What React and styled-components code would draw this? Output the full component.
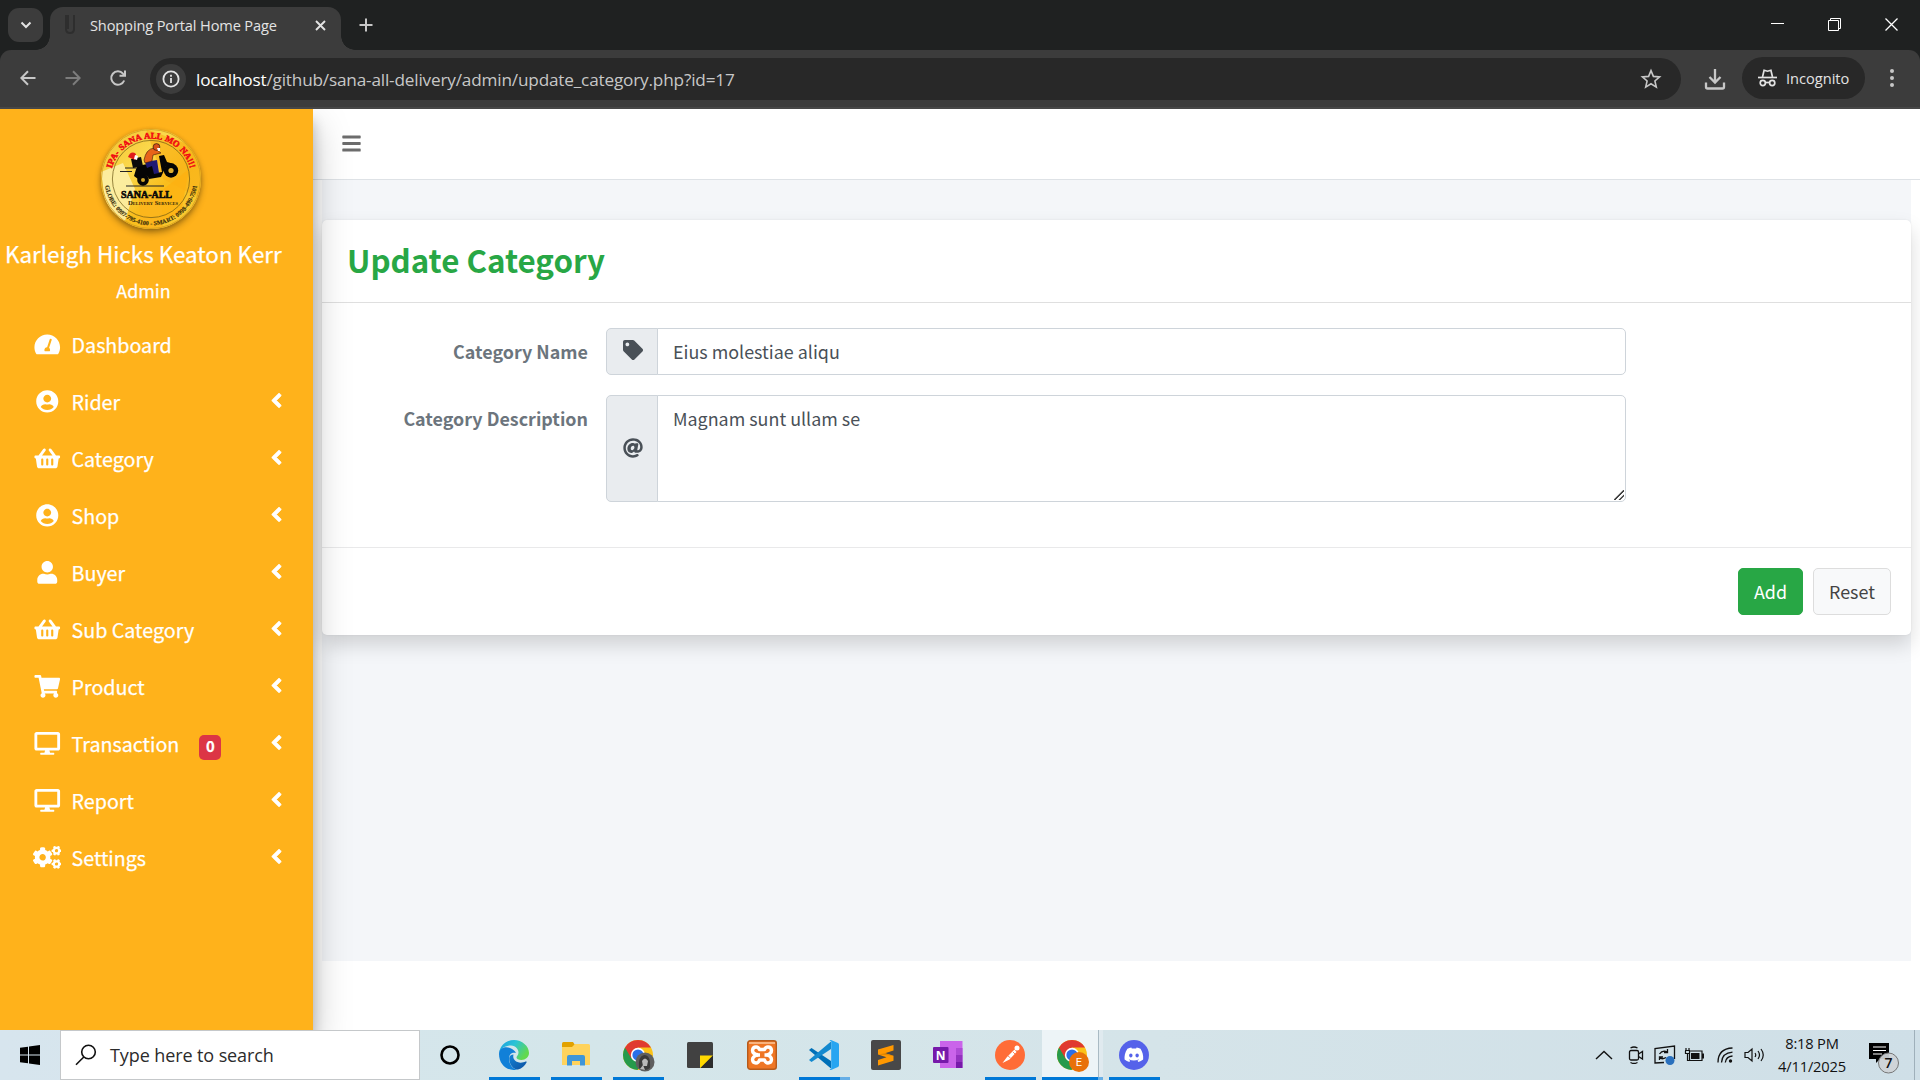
import React from "react";
import styled, { createGlobalStyle, css } from "styled-components";
import {
  FaUserCircle,
  FaShoppingBasket,
  FaUser,
  FaShoppingCart,
  FaDesktop,
  FaCogs,
  FaAngleLeft,
  FaTag,
  FaAt,
  FaBars,
} from "react-icons/fa";

const pageFont = `"Noto Sans CJK JP", "Noto Sans", sans-serif`;
const systemFont = `"Open Sans", "Noto Sans", sans-serif`;

const GlobalStyle = createGlobalStyle`
  *, *::before, *::after { box-sizing: border-box; }
  body { margin: 0; background: #fff; overflow: hidden; font-family: ${pageFont}; }
  svg { display: block; flex: none; }
`;

const Screen = styled.div`
  width: 1920px;
  height: 1080px;
  display: flex;
  flex-direction: column;
  overflow: hidden;
`;

/* ---------- browser window ---------- */

const TabStrip = styled.div`
  height: 50px;
  flex: none;
  display: flex;
  align-items: flex-end;
  background: #1f2121;
  padding-left: 8px;
  font-family: ${systemFont};
`;

const TabSearch = styled.div`
  width: 35px;
  height: 34px;
  margin-bottom: 8px;
  border-radius: 11px;
  background: #3c3c3c;
  display: grid;
  place-items: center;
`;

const Tab = styled.div`
  position: relative;
  width: 291px;
  height: 43px;
  margin-left: 7px;
  padding: 0 14px 7px 14px;
  border-radius: 13px 13px 0 0;
  background: #3c3c3c;
  display: flex;
  align-items: center;
  color: #e3e3e3;
  &::before,
  &::after {
    content: "";
    position: absolute;
    bottom: 0;
    width: 14px;
    height: 14px;
  }
  &::before {
    left: -14px;
    background: radial-gradient(circle at 0 0, transparent 13.5px, #3c3c3c 14px);
  }
  &::after {
    right: -14px;
    background: radial-gradient(circle at 100% 0, transparent 13.5px, #3c3c3c 14px);
  }
`;

const TabTitle = styled.span`
  margin-left: 14px;
  flex: 1;
  font-size: 14.6px;
  letter-spacing: -0.14px;
  line-height: 20px;
  white-space: nowrap;
`;

const NewTab = styled.div`
  width: 50px;
  height: 50px;
  padding-right: 1px;
  display: grid;
  place-items: center;
`;

const WindowButtons = styled.div`
  margin-left: auto;
  height: 50px;
  display: flex;
`;

const WindowButton = styled.div`
  width: 57px;
  height: 49px;
  display: grid;
  place-items: center;
`;

const ToolbarBack = styled.div`
  flex: none;
  height: 59px;
  background: #1f2121;
`;

const Toolbar = styled.div`
  height: 59px;
  border-radius: 11px 11px 0 0;
  background: #3c3c3c;
  border-bottom: 2px solid #474747;
  display: flex;
  align-items: center;
  padding: 0 14px 1px 5px;
  font-family: ${systemFont};
`;

const ToolButton = styled.div`
  width: 45px;
  height: 44px;
  padding-top: ${(p) => (p.$drop ? 2 : 0)}px;
  display: grid;
  place-items: center;
`;

const AddressBar = styled.div`
  flex: 1;
  height: 42px;
  margin: 2px 11px 0 10px;
  border-radius: 21px;
  background: #282828;
  display: flex;
  align-items: center;
  padding: 0 18px 0 6px;
`;

const SiteInfo = styled.div`
  width: 30px;
  height: 30px;
  border-radius: 50%;
  background: #3c3c3c;
  display: grid;
  place-items: center;
`;

const Url = styled.span`
  flex: 1;
  margin-left: 10px;
  padding-top: 1px;
  font-size: 17.2px;
  letter-spacing: -0.18px;
  line-height: 24px;
  color: #c7c7c7;
  b {
    font-weight: 400;
    color: #fff;
  }
`;

const IncognitoPill = styled.div`
  width: 123px;
  height: 42px;
  margin: 0 13px 0 5px;
  border-radius: 21px;
  background: #282828;
  color: #e3e3e3;
  display: flex;
  align-items: center;
  padding-left: 16px;
  gap: 9px;
  font-size: 14.6px;
`;

/* ---------- admin page ---------- */

const Page = styled.div`
  height: 921px;
  flex: none;
  display: flex;
  overflow: hidden;
`;

const Sidebar = styled.aside`
  position: relative;
  z-index: 2;
  width: 313px;
  flex: none;
  background: #ffb21b;
  color: #fff;
  -webkit-text-stroke: 0.25px #fff;
  padding-top: 20px;
  box-shadow: 0 17px 35px rgba(0, 0, 0, 0.25), 0 12px 12px rgba(0, 0, 0, 0.22);
`;

const LogoWrap = styled.div`
  width: 100px;
  height: 100px;
  margin-left: 101px;
  border-radius: 50%;
  box-shadow: 0 4px 7px rgba(0, 0, 0, 0.32), 0 1px 4px rgba(0, 0, 0, 0.2);
  -webkit-text-stroke: 0;
`;

const UserName = styled.div`
  margin: 8px 0 0 5px;
  font-size: 22.4px;
  line-height: 32px;
  white-space: nowrap;
`;

const UserRole = styled.div`
  width: 287px;
  margin-top: 7px;
  text-align: center;
  font-size: 17.9px;
  line-height: 28px;
`;

const Menu = styled.nav`
  margin-top: 12px;
  display: flex;
  flex-direction: column;
`;

const MenuItem = styled.div`
  height: 57px;
  display: flex;
  align-items: center;
  padding: 0 31px 0 31px;
  font-size: 19.7px;
  line-height: 30px;
`;

const MenuIcon = styled.span`
  width: 32px;
  display: flex;
  justify-content: center;
  font-size: 22.8px;
  svg {
    width: 1.25em;
    height: 1em;
  }
`;

const MenuText = styled.span`
  margin-left: 8.5px;
`;

const Badge = styled.span`
  width: 22px;
  height: 25px;
  margin: 7px 0 0 20px;
  border-radius: 5px;
  background: #dc3545;
  font-size: 14.8px;
  line-height: 22px;
  font-weight: 700;
  text-align: center;
`;

const Caret = styled.span`
  margin: -3px -6.5px 0 auto;
  font-size: 23px;
  width: 24px;
  display: flex;
  justify-content: center;
  svg {
    stroke: #fff;
    stroke-width: 14px;
  }
`;

const Main = styled.main`
  flex: 1;
  display: flex;
  flex-direction: column;
`;

const Navbar = styled.header`
  height: 71px;
  flex: none;
  background: #fff;
  border-bottom: 1px solid #dee2e6;
  display: flex;
  align-items: center;
  padding: 0 0 1px 28px;
  color: #6c6c6c;
  font-size: 21px;
`;

const Content = styled.section`
  height: 781px;
  margin: 0 9px;
  padding-top: 40px;
  background: #f4f6f9;
`;

const Card = styled.div`
  height: 415px;
  border-radius: 5px;
  background: #fff;
  box-shadow: 0 10px 20px rgba(0, 0, 0, 0.15), 0 0 2px rgba(0, 0, 0, 0.08);
  display: flex;
  flex-direction: column;
`;

const CardHeader = styled.div`
  height: 83px;
  border-bottom: 1px solid #dfdfdf;
  padding: 17px 0 0 25px;
`;

const CardTitle = styled.h1`
  margin: 0;
  color: #28a745;
  font-size: 31.3px;
  line-height: 46px;
  font-weight: 700;
`;

const CardBody = styled.div`
  flex: 1;
  padding-top: 25px;
  display: flex;
  flex-direction: column;
  gap: 20px;
`;

const FormRow = styled.div`
  display: flex;
`;

const Label = styled.label`
  width: 266px;
  margin-right: 18px;
  text-align: right;
  color: #6c757d;
  font-size: 17.9px;
  line-height: 30px;
  padding-top: 8px;
  font-weight: 700;
`;

const InputGroup = styled.div`
  width: 1020px;
  height: ${(p) => (p.$tall ? 107 : 47)}px;
  display: flex;
`;

const Addon = styled.span`
  width: 52px;
  border: 1px solid #ced4da;
  border-radius: 5px 0 0 5px;
  background: #e9ecef;
  color: #495057;
  font-size: 20px;
  display: flex;
  align-items: center;
  justify-content: center;
  padding: 0 0 ${(p) => (p.$lift ? 3 : 1)}px 1px;
`;

const field = css`
  flex: 1;
  margin: 0 0 0 -1px;
  border: 1px solid #ced4da;
  border-radius: 0 5px 5px 0;
  background: #fff;
  color: #495057;
  font: 400 17.9px/30px ${pageFont};
  outline: none;
`;

const TextInput = styled.input`
  ${field}
  padding: 6px 15px 8px 15px;
`;

const TextArea = styled.textarea`
  ${field}
  padding: 7px 15px 7px 15px;
  resize: vertical;
  &::-webkit-resizer {
    background: linear-gradient(
        135deg,
        transparent 6.2px,
        #444 6.8px,
        #444 7.8px,
        transparent 8.4px,
        transparent 9.8px,
        #444 10.4px,
        #444 11.2px,
        transparent 11.8px
      )
      4px 4px / 10px 10px no-repeat;
  }
`;

const CardFooter = styled.div`
  height: 88px;
  border-top: 1px solid #e9e9ea;
  padding: 20px 20px 0 0;
  display: flex;
  justify-content: flex-end;
  gap: 10px;
`;

const Button = styled.button`
  width: ${(p) => p.$width}px;
  height: 47px;
  padding: 0 0 1px;
  border-radius: 5px;
  border: 1px solid ${(p) => (p.$primary ? "#28a745" : "#ddd")};
  background: ${(p) => (p.$primary ? "#28a745" : "#f8f9fa")};
  color: ${(p) => (p.$primary ? "#fff" : "#444")};
  font: 400 17.9px/30px ${pageFont};
`;

/* ---------- taskbar ---------- */

const Taskbar = styled.footer`
  height: 50px;
  flex: none;
  display: flex;
  background: linear-gradient(90deg, #d7e5ee 0, #d4e6ea 30%, #d5e4e9 60%, #cfdfe7 100%);
  color: #111;
  font-family: ${systemFont};
`;

const StartButton = styled.div`
  width: 60px;
  display: grid;
  place-items: center;
`;

const SearchBox = styled.div`
  width: 360px;
  height: 50px;
  border: 1px solid #c5c8ca;
  background: #fff;
  display: flex;
  align-items: center;
  padding-left: 14px;
  gap: 13px;
  color: #2b2b2b;
  font-size: 18px;
  letter-spacing: -0.1px;
`;

const Cortana = styled.div`
  width: 63px;
  padding-right: 3px;
  display: grid;
  place-items: center;
`;

const TaskApp = styled.div`
  position: relative;
  width: 62px;
  height: 50px;
  display: grid;
  place-items: center;
  &::before {
    content: "";
    display: ${(p) => (p.$active ? "block" : "none")};
    position: absolute;
    inset: 0 0 0 1px;
    background: linear-gradient(90deg, #edf4f7 56px, #a9bac4 56px, #a9bac4 57px, #e0eaef 57px);
  }
  &::after {
    content: "";
    display: ${(p) => (p.$running ? "block" : "none")};
    position: absolute;
    bottom: 0;
    height: 3px;
    left: ${(p) => (p.$active ? 1 : 6)}px;
    width: ${(p) => (p.$active ? 61 : 51)}px;
    background: ${(p) =>
      p.$grouped
        ? "linear-gradient(90deg, #0078d7 41px, #66aee6 41px)"
        : p.$active
        ? "linear-gradient(90deg, #0078d7 56px, #66aee6 56px)"
        : "#0078d7"};
  }
  svg {
    position: relative;
  }
`;

const Tray = styled.div`
  margin-left: auto;
  display: flex;
  align-items: center;
`;

const TrayIcon = styled.div`
  width: ${(p) => p.$width || 30}px;
  display: grid;
  place-items: center;
`;

const Notifications = styled.div`
  width: 60px;
  padding: 6px 0 0 15px;
`;

const Clock = styled.div`
  width: 84px;
  font-size: 14.7px;
  letter-spacing: -0.2px;
  line-height: 23px;
  text-align: center;
  white-space: nowrap;
`;

const ShowDesktop = styled.div`
  width: 6px;
  height: 50px;
  border-left: 1px solid #9fb0ba;
`;

const Glyph = ({ w, h = w, box, color = "#c7c7c7", stroke = 2, children }) => (
  <svg width={w} height={h} viewBox={box || `0 0 ${w} ${h}`} fill="none" stroke={color} strokeWidth={stroke}>
    {children}
  </svg>
);

const GaugeIcon = () => (
  <svg viewBox="0 0 576 512" fill="currentColor">
    <path
      fillRule="evenodd"
      d="M288 32C129 32 0 161 0 320c0 53 14 102 39 145 6 9 16 15 27 15h444c11 0 21-6 27-15 25-43 39-92 39-145C576 161 447 32 288 32zM371 129c13 4 20 18 16 31l-57 172c13 11 22 28 22 48 0 12-3 23-9 32H233c-6-9-9-20-9-32 0-35 29-64 61-62l57-173c4-13 17-20 29-16z"
    />
  </svg>
);

const BrandLogo = () => (
  <svg width="100" height="100" viewBox="0 0 100 100">
    <defs>
      <linearGradient id="disc" x1="0" y1="0" x2="1" y2="1">
        <stop offset="0" stopColor="#f4bf2c" />
        <stop offset=".35" stopColor="#fbd94c" />
        <stop offset=".6" stopColor="#f9bd1c" />
        <stop offset="1" stopColor="#fbd03c" />
      </linearGradient>
      <clipPath id="round"><circle cx="50" cy="50" r="50" /></clipPath>
      <path id="arcTop" d="M9.500 50 A40.500 40.500 0 0 1 90.500 50" />
      <path id="arcBottom" d="M3.600 50 A46.400 46.400 0 0 0 96.400 50" />
    </defs>
    <g clipPath="url(#round)">
      <rect width="100" height="100" fill="url(#disc)" />
      <path d="M0 43 L22 34 L34 60 L24 92 L6 84 Z" fill="#fdf2b4" opacity=".8" />
      <path d="M45 0 L100 20 V70 L62 50 Z" fill="#f9b41a" opacity=".7" />
      <path d="M60 62 L88 40 L80 84 L58 92 Z" fill="#fdb010" opacity=".75" />
      <path d="M38 70 L60 62 L62 100 H40 Z" fill="#fcb51c" opacity=".9" />
    </g>
    <circle cx="50" cy="50" r="49.500" fill="none" stroke="#cf9d20" strokeWidth=".8" />
    <circle cx="50" cy="50" r="38.600" fill="none" stroke="#6b5714" strokeWidth=".7" />
    <text fontFamily="Liberation Serif, serif" fontWeight="700" fontSize="8.700" wordSpacing=".8" fill="#f00a12" stroke="#f00a12" strokeWidth=".5">
      <textPath href="#arcTop" startOffset="50%" textAnchor="middle">IPA- SANA ALL MO NA!!!</textPath>
    </text>
    <text fontFamily="Liberation Serif, serif" fontWeight="700" fontSize="6.200" fill="#3a300c" stroke="#3a300c" strokeWidth=".15">
      <textPath href="#arcBottom" startOffset="50%" textAnchor="middle" textLength="132" lengthAdjust="spacingAndGlyphs">GLOBE: 0997-795-4100 - SMART: 0998-499-7501</textPath>
    </text>
    <g stroke="#222" strokeWidth="1">
      <path d="M24 39h11M19 42.500h12M25 57h38" />
    </g>
    <circle cx="42" cy="51" r="5.800" fill="#050505" />
    <circle cx="42" cy="51" r="2" fill="#cfa52a" />
    <circle cx="70" cy="41.500" r="7.200" fill="#050505" />
    <circle cx="70" cy="41.500" r="2.600" fill="#e0b030" />
    <path d="M33 47 L36 37 L52 34 L55 44 L61 43 L58 27 L63 26 L66 33 L73 35 L65 37 L60 48 L48 50 Q45 43 37 50 Z" fill="#050505" />
    <path d="M30 30 L40 28 L42 37 L32 39 Z" fill="#0b0b0b" />
    <path d="M27 28 Q30 21 35 25 L34 31 Z" fill="#e01b1b" />
    <path d="M34 26l3 1-1 4-3-1z" fill="#fff" />
    <path d="M44 33 L56 31 L58 44 L53 45 L51 37 L46 39 Z" fill="#201a74" />
    <path d="M43 31 Q45 20 53 19 L60 24 L52 26 L51 32 L44 34 Z" fill="#e8641a" stroke="#3a1a08" strokeWidth=".6" />
    <circle cx="55.500" cy="18" r="3.400" fill="#d9501a" stroke="#111" strokeWidth=".6" />
    <path d="M56 19h3v3h-2z" fill="#fff" />
    <text x="20" y="68.700" textLength="51" lengthAdjust="spacingAndGlyphs" fontFamily="Liberation Serif, serif" fontWeight="700" fontSize="9.800" fill="#0a0a0a" stroke="#0a0a0a" strokeWidth=".6">SANA-ALL</text>
    <text x="27" y="75.800" textLength="50" lengthAdjust="spacingAndGlyphs" fontFamily="Liberation Serif, serif" fontVariant="small-caps" fontWeight="700" fontSize="6" fill="#2c240a">Delivery Services</text>
  </svg>
);

const EdgeIcon = () => (
  <svg width="30" height="30" viewBox="0 0 30 30">
    <defs>
      <linearGradient id="edgeTop" x1="0" y1="0" x2="1" y2=".5">
        <stop offset="0" stopColor="#1b9de2" /><stop offset=".5" stopColor="#2cc3d5" /><stop offset="1" stopColor="#62d94e" />
      </linearGradient>
      <linearGradient id="edgeLow" x1="0" y1="0" x2="1" y2="1">
        <stop offset="0" stopColor="#1384d8" /><stop offset="1" stopColor="#0c4f9f" />
      </linearGradient>
    </defs>
    <path d="M15 0C7 0 1 5.500 0 13c2-5 7-7.500 12-7.500 5 0 7.500 4 7.500 7 0 2.500-2 3.500-2 5 0 1.600 2 2.500 5 2.500 4 0 7.500-3 7.500-7C30 6 23 0 15 0z" fill="url(#edgeTop)" />
    <path d="M0 14C0 8 6 6 11 8c3 1 5 3 6 5-5-1-7 2-7 6 0 6 5 11 9 10.500C9 32 0 25 0 14z" fill="#1180d8" />
    <path d="M10.200 18C10 25 15 29.800 19 29.500c4-1 7-4 8.500-7 .5-1-.2-1.400-1-.9-2.500 1.400-8 1.800-10.500-1-2-2-2-4-1.500-6-2.500 0-4 1.400-4.300 3.400z" fill="url(#edgeLow)" />
  </svg>
);

const ExplorerIcon = () => (
  <svg width="28" height="26" viewBox="0 0 28 26">
    <path d="M0 1.500Q0 0 1.500 0H11l2 3v6H0z" fill="#e2a100" />
    <path d="M0 5h10l3-3h13.500Q28 2 28 3.500V23H0z" fill="#ffd35c" />
    <path d="M5 23.500V15q0-2 2-2h14q2 0 2 2v8.500h-5V19h-8v4.500z" fill="#3f96d8" />
  </svg>
);

const ChromeIcon = ({ children }) => (
  <svg width="32" height="32" viewBox="1 -1 32 32" overflow="visible">
    <circle cx="17" cy="15" r="15" fill="#fbc218" />
    <path d="M17 15L4 7.500A15 15 0 0 0 16.500 30L23.500 18.500Z" fill="#269a4b" />
    <path d="M4 7.500A15 15 0 0 1 30 7.500H17L10.500 18.700Z" fill="#e03a2f" />
    <circle cx="17" cy="15" r="7.200" fill="#fff" />
    <circle cx="17" cy="15" r="5.600" fill="#2a6fe8" />
    {children}
  </svg>
);

const StickyIcon = () => (
  <svg width="26" height="26" viewBox="0 0 26 26">
    <rect width="26" height="26" rx="1.500" fill="#414141" />
    <path d="M13 13.500h13L13.500 26H13z" fill="#ffd900" />
    <path d="M26 13.500V26H13.500z" fill="#2c2c2c" />
  </svg>
);

const XamppIcon = () => (
  <svg width="30" height="30" viewBox="0 0 30 30">
    <rect x=".7" y=".7" width="28.600" height="28.600" rx="2.500" fill="#ef7624" stroke="#b65a1b" strokeWidth="1.400" />
    <path d="M2 2h26v2H2z" fill="#f9b37d" />
    <g fill="none" stroke="#fff" strokeWidth="3.400" strokeLinejoin="round">
      <path d="M11 14.800Q5.500 14 5.500 10.300 5.800 7 9 7q2.500 0 3.500 2.500h5Q18.500 7 21 7q3.200 0 3.500 3.300 0 3.700-4.500 4.500" />
      <path d="M11 14.800Q5.500 16 5.500 19.700 5.800 23 9 23q2.500 0 3.500-3h5q1 3 3.500 3 3.200 0 3.500-3.300 0-3.700-4.500-4.900" />
      <path d="M10 15h3M17.500 15h3" />
    </g>
  </svg>
);

const CodeIcon = () => (
  <svg width="30" height="30" viewBox="0 0 30 30">
    <path d="M2.500 8L0 10l22 18.500V21z" fill="#0070b8" />
    <path d="M2.500 22L0 20 22 1.500V9z" fill="#1389cf" />
    <path d="M22 0l7 3q1 .5 1 1.800v20.400q0 1.300-1 1.800l-7 3q-.8.200-1.500-.5l1.700-.8V1.300L20.500.5q.7-.7 1.500-.5z" fill="#27a5f1" />
  </svg>
);

const SublimeIcon = () => (
  <svg width="30" height="30" viewBox="0 0 30 30">
    <rect width="30" height="30" rx="2" fill="#484848" />
    <path d="M22.500 5v5.500L14 13.200l8.500 2.600v5L7 25.500V20l8.500-2.700L7 14.600V9.500z" fill="#ff9800" />
    <path d="M7 14.600l15.500 1.200-8.500-2.600z" fill="#e08600" />
  </svg>
);

const OneNoteIcon = () => (
  <svg width="30" height="30" viewBox="0 0 30 30">
    <path d="M7 1h22.500v27H7z" fill="#ca64ea" />
    <path d="M23 8h6.500v7H23z" fill="#ae4bd5" />
    <path d="M23 15h6.500v7H23z" fill="#9332bf" />
    <path d="M23 22h6.500v6H23z" fill="#7719aa" />
    <rect y="7" width="15.500" height="16" rx="1" fill="#7719aa" />
    <text x="7.700" y="19.500" textAnchor="middle" fontFamily="Open Sans, sans-serif" fontWeight="700" fontSize="12" fill="#fff">N</text>
  </svg>
);

const PostmanIcon = () => (
  <svg width="30" height="30" viewBox="0 0 30 30">
    <circle cx="15" cy="15" r="15" fill="#ff6c37" />
    <circle cx="22" cy="8" r="2.500" fill="#fff" />
    <path d="M19.500 9.500l2 2.500-7 7.500-7 3.500 4.500-6z" fill="#fff" />
    <path d="M12.500 15.500l3 2.500M18 12l2 2" stroke="#ff6c37" strokeWidth=".8" />
  </svg>
);

const DiscordIcon = () => (
  <svg width="30" height="30" viewBox="0 0 30 30">
    <circle cx="15" cy="15" r="15" fill="#5562ea" />
    <path transform="translate(5.500 5.300) scale(.79)" d="M20.317 4.370a19.791 19.791 0 0 0-4.885-1.515.074.074 0 0 0-.079.037c-.21.375-.444.864-.608 1.250a18.270 18.270 0 0 0-5.487 0 12.640 12.640 0 0 0-.617-1.250.077.077 0 0 0-.079-.037A19.736 19.736 0 0 0 3.677 4.370C.533 9.046-.320 13.580.099 18.058a20 20 0 0 0 5.993 3.030c.462-.630.874-1.295 1.226-1.994a13 13 0 0 1-1.872-.892l.372-.292c3.928 1.793 8.180 1.793 12.062 0l.373.292a12.300 12.300 0 0 1-1.873.892c.36.698.772 1.362 1.225 1.993a19.900 19.900 0 0 0 6.002-3.030c.5-5.177-.838-9.674-3.290-13.687zM8.020 15.331c-1.183 0-2.157-1.086-2.157-2.419s.956-2.419 2.157-2.419c1.210 0 2.176 1.096 2.157 2.419 0 1.333-.956 2.419-2.157 2.419zm7.975 0c-1.183 0-2.157-1.086-2.157-2.419s.955-2.419 2.157-2.419c1.210 0 2.176 1.096 2.157 2.419 0 1.333-.946 2.419-2.157 2.419z" fill="#fff" />
  </svg>
);

const menu = [
  ["Dashboard", GaugeIcon, false],
  ["Rider", FaUserCircle, true],
  ["Category", FaShoppingBasket, true],
  ["Shop", FaUserCircle, true],
  ["Buyer", FaUser, true],
  ["Sub Category", FaShoppingBasket, true],
  ["Product", FaShoppingCart, true],
  ["Transaction", FaDesktop, true, "0"],
  ["Report", FaDesktop, true],
  ["Settings", FaCogs, true],
];

const BrowserTabs = () => (
  <TabStrip>
    <TabSearch>
      <Glyph w={12} h={8} color="#e3e3e3"><path d="M1.500 1.500L6 6l4.500-4.500" /></Glyph>
    </TabSearch>
    <Tab>
      <Glyph w={12} h={20} color="#2e2e2e"><path d="M2 0v14q0 4 4 4t4-4V0M4 0v14" /></Glyph>
      <TabTitle>Shopping Portal Home Page</TabTitle>
      <Glyph w={13} color="#e3e3e3" stroke={1.900}><path d="M2 2l9 9M11 2l-9 9" /></Glyph>
    </Tab>
    <NewTab>
      <Glyph w={14} color="#c7c7c7"><path d="M7 .5v13M.5 7h13" /></Glyph>
    </NewTab>
    <WindowButtons>
      <WindowButton><Glyph w={13} color="#fff" stroke={1}><path d="M0 5.500h13" /></Glyph></WindowButton>
      <WindowButton><Glyph w={13} color="#fff" stroke={1}><path d="M.5 2.500h10v10h-10zM2.500 2.500v-2h10v10h-2" /></Glyph></WindowButton>
      <WindowButton><Glyph w={13} color="#fff" stroke={1.300}><path d="M.5.5l12 12M12.500.5l-12 12" /></Glyph></WindowButton>
    </WindowButtons>
  </TabStrip>
);

const BrowserToolbar = () => (
  <ToolbarBack>
    <Toolbar>
      <ToolButton><Glyph w={16}><path d="M15.500 8H1.800M8 1.300L1.300 8 8 14.700" /></Glyph></ToolButton>
      <ToolButton><Glyph w={16} color="#7c7c7c"><path d="M.5 8h13.700M8 1.300L14.700 8 8 14.700" /></Glyph></ToolButton>
      <ToolButton><Glyph w={18}><path d="M15.200 11.500A6.700 6.700 0 1 1 14 4.600L16 6.600M16 1.500v5.300h-5.500" /></Glyph></ToolButton>
      <AddressBar>
        <SiteInfo>
          <Glyph w={18} color="#e3e3e3" stroke={1.800}><circle cx="9" cy="9" r="7.600" /><path d="M9 8v5M9 4.800v2" /></Glyph>
        </SiteInfo>
        <Url><b>localhost</b>/github/sana-all-delivery/admin/update_category.php?id=17</Url>
        <Glyph w={24} stroke={1.600}><path d="M12 3.600l2.400 5.800 6.200.5-4.700 4.100 1.400 6.100L12 16.800l-5.300 3.300 1.400-6.100-4.700-4.100 6.200-.5z" /></Glyph>
      </AddressBar>
      <ToolButton $drop>
        <Glyph w={22} stroke={2.300}><path d="M11 1v13M5.500 9l5.500 5.500L16.500 9M2 14.500V19q0 1.500 1.500 1.500h15Q20 20.500 20 19v-4.500" /></Glyph>
      </ToolButton>
      <IncognitoPill>
        <Glyph w={19} h={18} color="#e3e3e3" stroke={1.700}>
          <path d="M0 8.500h19" />
          <path d="M4.500 8l1.600-6.800 3.400 1 3.400-1L14.500 8" />
          <circle cx="4.800" cy="14" r="2.600" /><circle cx="14.200" cy="14" r="2.600" /><path d="M7.400 13.500h4.200" />
        </Glyph>
        <span>Incognito</span>
      </IncognitoPill>
      <Glyph w={28} h={20}>
        <g fill="#c7c7c7" stroke="none"><circle cx="14" cy="3" r="2" /><circle cx="14" cy="10" r="2" /><circle cx="14" cy="17" r="2" /></g>
      </Glyph>
    </Toolbar>
  </ToolbarBack>
);

const AdminPage = () => (
  <Page>
    <Sidebar>
      <LogoWrap><BrandLogo /></LogoWrap>
      <UserName>Karleigh Hicks Keaton Kerr</UserName>
      <UserRole>Admin</UserRole>
      <Menu>
        {menu.map(([label, Icon, expandable, count]) => (
          <MenuItem key={label}>
            <MenuIcon><Icon /></MenuIcon>
            <MenuText>{label}</MenuText>
            {count && <Badge>{count}</Badge>}
            {expandable && <Caret><FaAngleLeft /></Caret>}
          </MenuItem>
        ))}
      </Menu>
    </Sidebar>
    <Main>
      <Navbar><FaBars /></Navbar>
      <Content>
        <Card>
          <CardHeader><CardTitle>Update Category</CardTitle></CardHeader>
          <CardBody>
            <FormRow>
              <Label>Category Name</Label>
              <InputGroup>
                <Addon $lift><FaTag /></Addon>
                <TextInput defaultValue="Eius molestiae aliqu" />
              </InputGroup>
            </FormRow>
            <FormRow>
              <Label>Category Description</Label>
              <InputGroup $tall>
                <Addon><FaAt /></Addon>
                <TextArea spellCheck={false} defaultValue="Magnam sunt ullam se" />
              </InputGroup>
            </FormRow>
          </CardBody>
          <CardFooter>
            <Button $primary $width={65}>Add</Button>
            <Button $width={78}>Reset</Button>
          </CardFooter>
        </Card>
      </Content>
    </Main>
  </Page>
);

const WindowsTaskbar = () => (
  <Taskbar>
    <StartButton>
      <svg width="20" height="20" viewBox="0 0 20 20" fill="#000">
        <path d="M0 2.800L8 1.700V9.500H0zM9 1.500L20 0V9.500H9zM0 10.500h8v7.800L0 17.200zM9 10.500h11V20L9 18.500z" />
      </svg>
    </StartButton>
    <SearchBox>
      <Glyph w={22} color="#111" stroke={1.600}><circle cx="13.500" cy="8" r="6.800" /><path d="M8.800 13L1 20.800" /></Glyph>
      <span>Type here to search</span>
    </SearchBox>
    <Cortana><Glyph w={20} color="#000" stroke={2.600}><circle cx="10" cy="10" r="8.500" /></Glyph></Cortana>
    <TaskApp $running><EdgeIcon /></TaskApp>
    <TaskApp $running><ExplorerIcon /></TaskApp>
    <TaskApp $running>
      <ChromeIcon>
        <circle cx="24" cy="22" r="9.500" fill="#5f5f5f" />
        <path d="M18 28q-1-12 5-13 7 0 6 13-5 4-11 0z" fill="#3a3a3a" />
        <path d="M21 21q3-5 6 0l-1 5h-4zM19 29l3-4 2 5z" fill="#b9b9b9" />
      </ChromeIcon>
    </TaskApp>
    <TaskApp><StickyIcon /></TaskApp>
    <TaskApp><XamppIcon /></TaskApp>
    <TaskApp $running $grouped><CodeIcon /></TaskApp>
    <TaskApp><SublimeIcon /></TaskApp>
    <TaskApp><OneNoteIcon /></TaskApp>
    <TaskApp $running><PostmanIcon /></TaskApp>
    <TaskApp $running $active>
      <ChromeIcon>
        <circle cx="24" cy="22" r="10" fill="#e8710a" />
        <text x="24" y="26" textAnchor="middle" fontFamily="Roboto, sans-serif" fontSize="11" fill="#fff">E</text>
      </ChromeIcon>
    </TaskApp>
    <TaskApp $running><DiscordIcon /></TaskApp>
    <Tray>
      <TrayIcon $width={32}><Glyph w={18} h={10} color="#111" stroke={1.400}><path d="M1 9l8-7.500L17 9" /></Glyph></TrayIcon>
      <TrayIcon $width={32}>
        <Glyph w={16} h={18} color="#111" stroke={1.300}>
          <rect x="1.500" y="4.500" width="9" height="9.500" rx="1.500" /><path d="M10.500 8l4-2.500v7.500l-4-2.500M2.500 2q3.500-2 7 0M2.500 16.500q3.500 2 7 0" />
        </Glyph>
      </TrayIcon>
      <TrayIcon $width={26}>
        <Glyph w={22} h={20} color="#111" stroke={1.300}>
          <path d="M10 17.500L1 18V3.500L20.500 1v13M5.500 9q3-4.500 8-2M13.500 4v3.500H10M12 12.500q-4 2.500-6.500 0M5.500 15v-3H9" />
          <circle cx="16" cy="15.500" r="4.500" fill="#2a70bd" stroke="none" />
        </Glyph>
      </TrayIcon>
      <TrayIcon $width={32}>
        <Glyph w={20} h={14} color="#111" stroke={1.200}>
          <path d="M5.500 3H18v9.500H5.500zM18.500 6v4h1V6zM1 2.500h5M2 0v2.500M5 0v2.500M1.500 3v2.500h4V3M3.500 6v6.500h2" />
          <path d="M7 5h8.500v6H7z" fill="#111" stroke="none" />
        </Glyph>
      </TrayIcon>
      <TrayIcon>
        <Glyph w={16} h={16} color="#111" stroke={1.300}>
          <path d="M1 15.500Q1 1.500 15.500 1M4.500 15.500Q5 6 15.500 5.200M8.300 15.500Q9 9.500 15.500 9" />
          <circle cx="13.500" cy="14" r="1.700" fill="#111" stroke="none" />
        </Glyph>
      </TrayIcon>
      <TrayIcon>
        <Glyph w={22} h={16} color="#111" stroke={1.200}>
          <path d="M1 5.500h3L8 2v12l-4-3.500H1zM11 6q1.500 2 0 4M14 4q3 4 0 8M17 2q4.500 6 0 12" />
        </Glyph>
      </TrayIcon>
      <Clock>8:18 PM<br />4/11/2025</Clock>
      <Notifications>
        <svg width="32" height="32" viewBox="0 0 32 32">
          <path d="M0 1h20v16h-9l-4 4v-4H0z" fill="#000" />
          <path d="M4 5h13M4 8.500h13M4 12h9" stroke="#fff" strokeWidth="1.200" />
          <circle cx="19.500" cy="21" r="10" fill="#cfd3d6" fillOpacity=".93" stroke="#777" strokeWidth="1" />
          <text x="19.500" y="26" textAnchor="middle" fontFamily="Open Sans, sans-serif" fontSize="14" fontWeight="600" fill="#111">7</text>
        </svg>
      </Notifications>
      <ShowDesktop />
    </Tray>
  </Taskbar>
);

export default function App() {
  return (
    <Screen>
      <GlobalStyle />
      <BrowserTabs />
      <BrowserToolbar />
      <AdminPage />
      <WindowsTaskbar />
    </Screen>
  );
}
